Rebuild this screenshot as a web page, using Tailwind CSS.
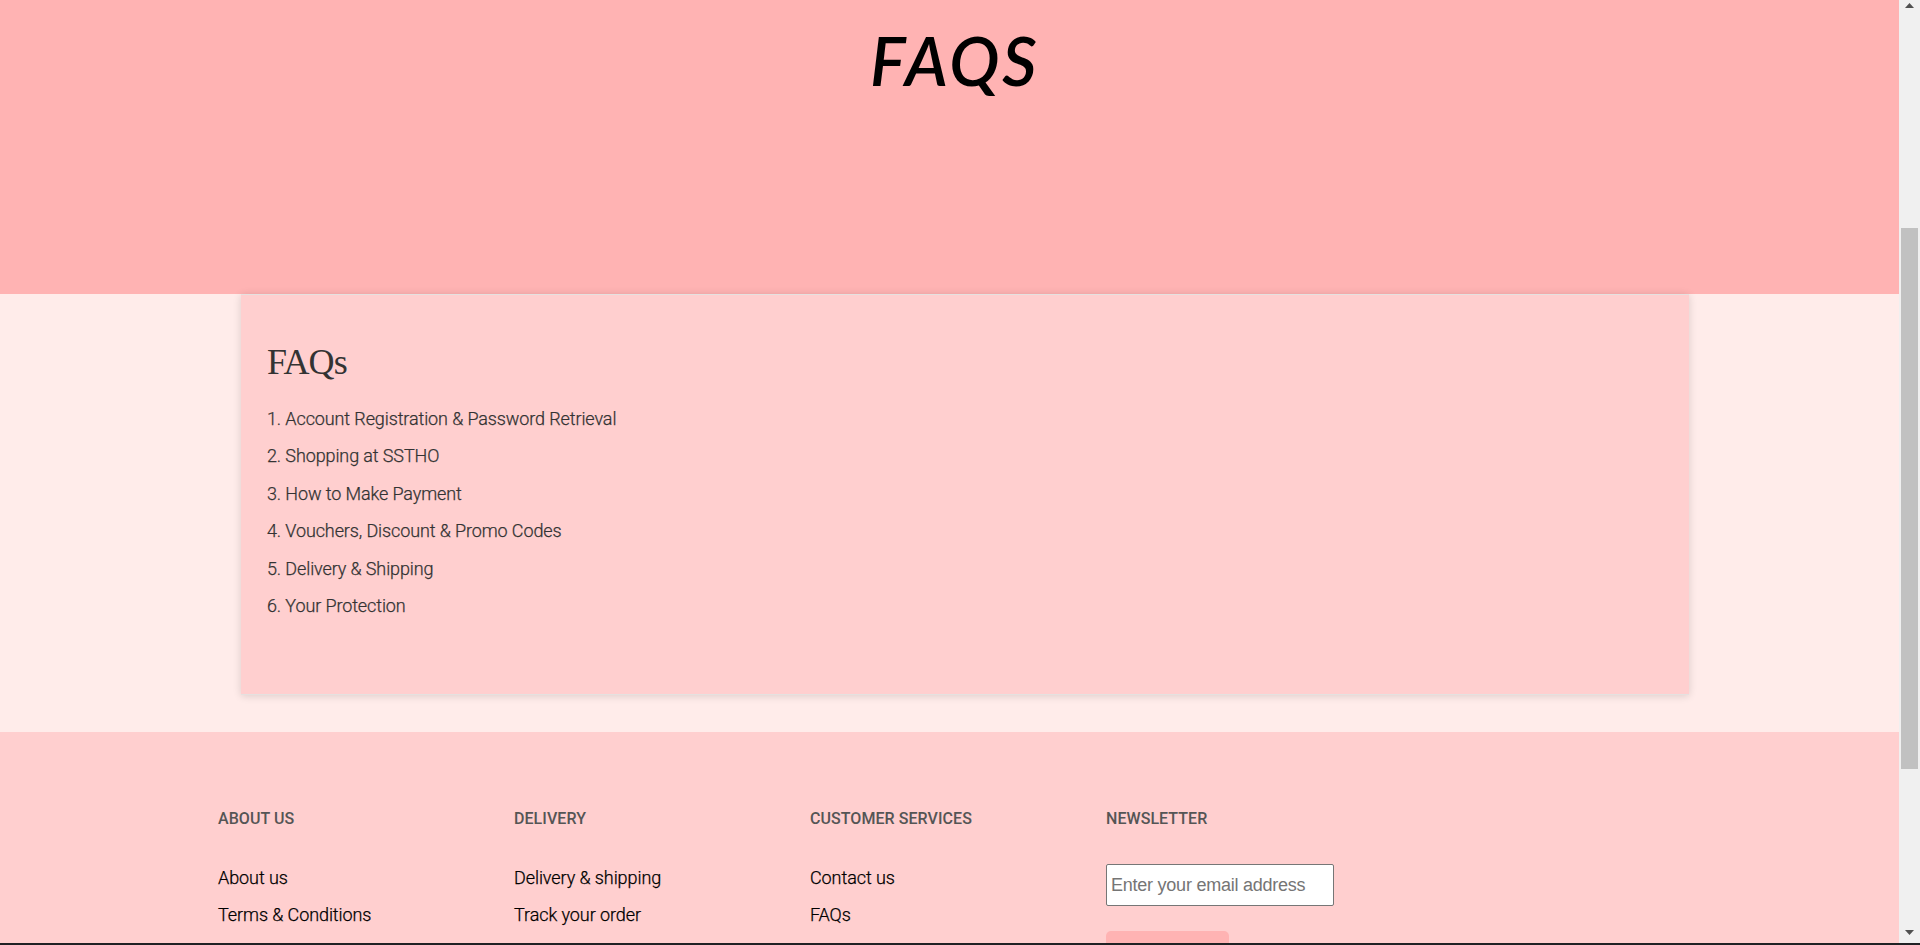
<!DOCTYPE html>
<html lang="en">
<head>
<meta charset="utf-8">
<title>FAQs</title>
<script src="https://cdn.jsdelivr.net/npm/@tailwindcss/browser@4"></script>
</head>
<body class="h-[945px] overflow-hidden bg-[#ffecea] font-['Roboto',sans-serif] text-lg">
<div class="flex h-[943px] overflow-hidden">
  <div class="flex w-[1899px] flex-col">
    <header class="h-[294px] shrink-0 bg-[#ffb3b3] pt-[20px] pl-[870px]">
      <h1 class="text-[67px] leading-[80px] font-semibold tracking-[3px] text-black italic font-['Lato',sans-serif]">FAQS</h1>
    </header>
    <main class="h-[438px] shrink-0 pl-[241px]">
      <section class="h-[401px] w-[1448px] border-t border-b border-[#e5e1e0] bg-[#ffcfcf] pt-[45px] pl-[26px] text-[#333] shadow-[0_1px_8px_rgba(0,0,0,0.14)]">
        <h2 class="h-[60px] text-[36px] leading-[45px] tracking-[-0.9px] font-['Liberation_Serif',serif]">FAQs</h2>
        <ol class="leading-[37.4px] font-light tracking-[-0.11px] [-webkit-text-stroke:0.25px_#333]">
          <li>1. Account Registration &amp; Password Retrieval</li>
          <li>2. Shopping at SSTHO</li>
          <li>3. How to Make Payment</li>
          <li>4. Vouchers, Discount &amp; Promo Codes</li>
          <li>5. Delivery &amp; Shipping</li>
          <li>6. Your Protection</li>
        </ol>
      </section>
    </main>
    <footer class="grid grow grid-cols-[296px_296px_296px_1fr] bg-[#ffcfcf] pt-[75px] pl-[218px] text-black">
      <div>
        <h3 class="mb-[28px] text-base leading-6 font-medium tracking-[0.06px] text-[#555]">ABOUT US</h3>
        <p class="leading-[37.4px] font-light tracking-[-0.08px] [-webkit-text-stroke:0.25px_#000]">About us</p>
        <p class="leading-[37.4px] font-light tracking-[-0.08px] [-webkit-text-stroke:0.25px_#000]">Terms &amp; Conditions</p>
      </div>
      <div>
        <h3 class="mb-[28px] text-base leading-6 font-medium tracking-[0.06px] text-[#555]">DELIVERY</h3>
        <p class="leading-[37.4px] font-light tracking-[-0.08px] [-webkit-text-stroke:0.25px_#000]">Delivery &amp; shipping</p>
        <p class="leading-[37.4px] font-light tracking-[-0.08px] [-webkit-text-stroke:0.25px_#000]">Track your order</p>
      </div>
      <div>
        <h3 class="mb-[28px] text-base leading-6 font-medium tracking-[0.06px] text-[#555]">CUSTOMER SERVICES</h3>
        <p class="leading-[37.4px] font-light tracking-[-0.08px] [-webkit-text-stroke:0.25px_#000]">Contact us</p>
        <p class="leading-[37.4px] font-light tracking-[-0.08px] [-webkit-text-stroke:0.25px_#000]">FAQs</p>
      </div>
      <div>
        <h3 class="mb-[33px] text-base leading-6 font-medium tracking-[0.06px] text-[#555]">NEWSLETTER</h3>
        <input type="email" placeholder="Enter your email address" class="block h-[42px] w-[228px] rounded-[2px] border border-[#767676] bg-white px-1 text-lg tracking-[-0.24px] font-['Liberation_Sans',sans-serif] placeholder:text-[#757575]">
        <div class="mt-[25px] h-10 w-[123px] rounded-[5px] bg-[#ffb3b3]"></div>
      </div>
    </footer>
  </div>
  <div class="flex w-[21px] flex-col items-center bg-[#f0f0f0]">
    <svg class="mt-[3px] h-[5px] w-[9px] shrink-0" viewBox="0 0 9 5" fill="#505050"><path d="M4.5 0 9 5H0z"/></svg>
    <div class="mt-[220px] h-[541px] w-[17px] shrink-0 bg-[#c1c1c1]"></div>
    <svg class="mt-[161px] h-[5px] w-[9px] shrink-0" viewBox="0 0 9 5" fill="#505050"><path d="M0 0H9L4.5 5z"/></svg>
  </div>
</div>
<div class="h-[2px] bg-[#202124]"></div>
</body>
</html>
